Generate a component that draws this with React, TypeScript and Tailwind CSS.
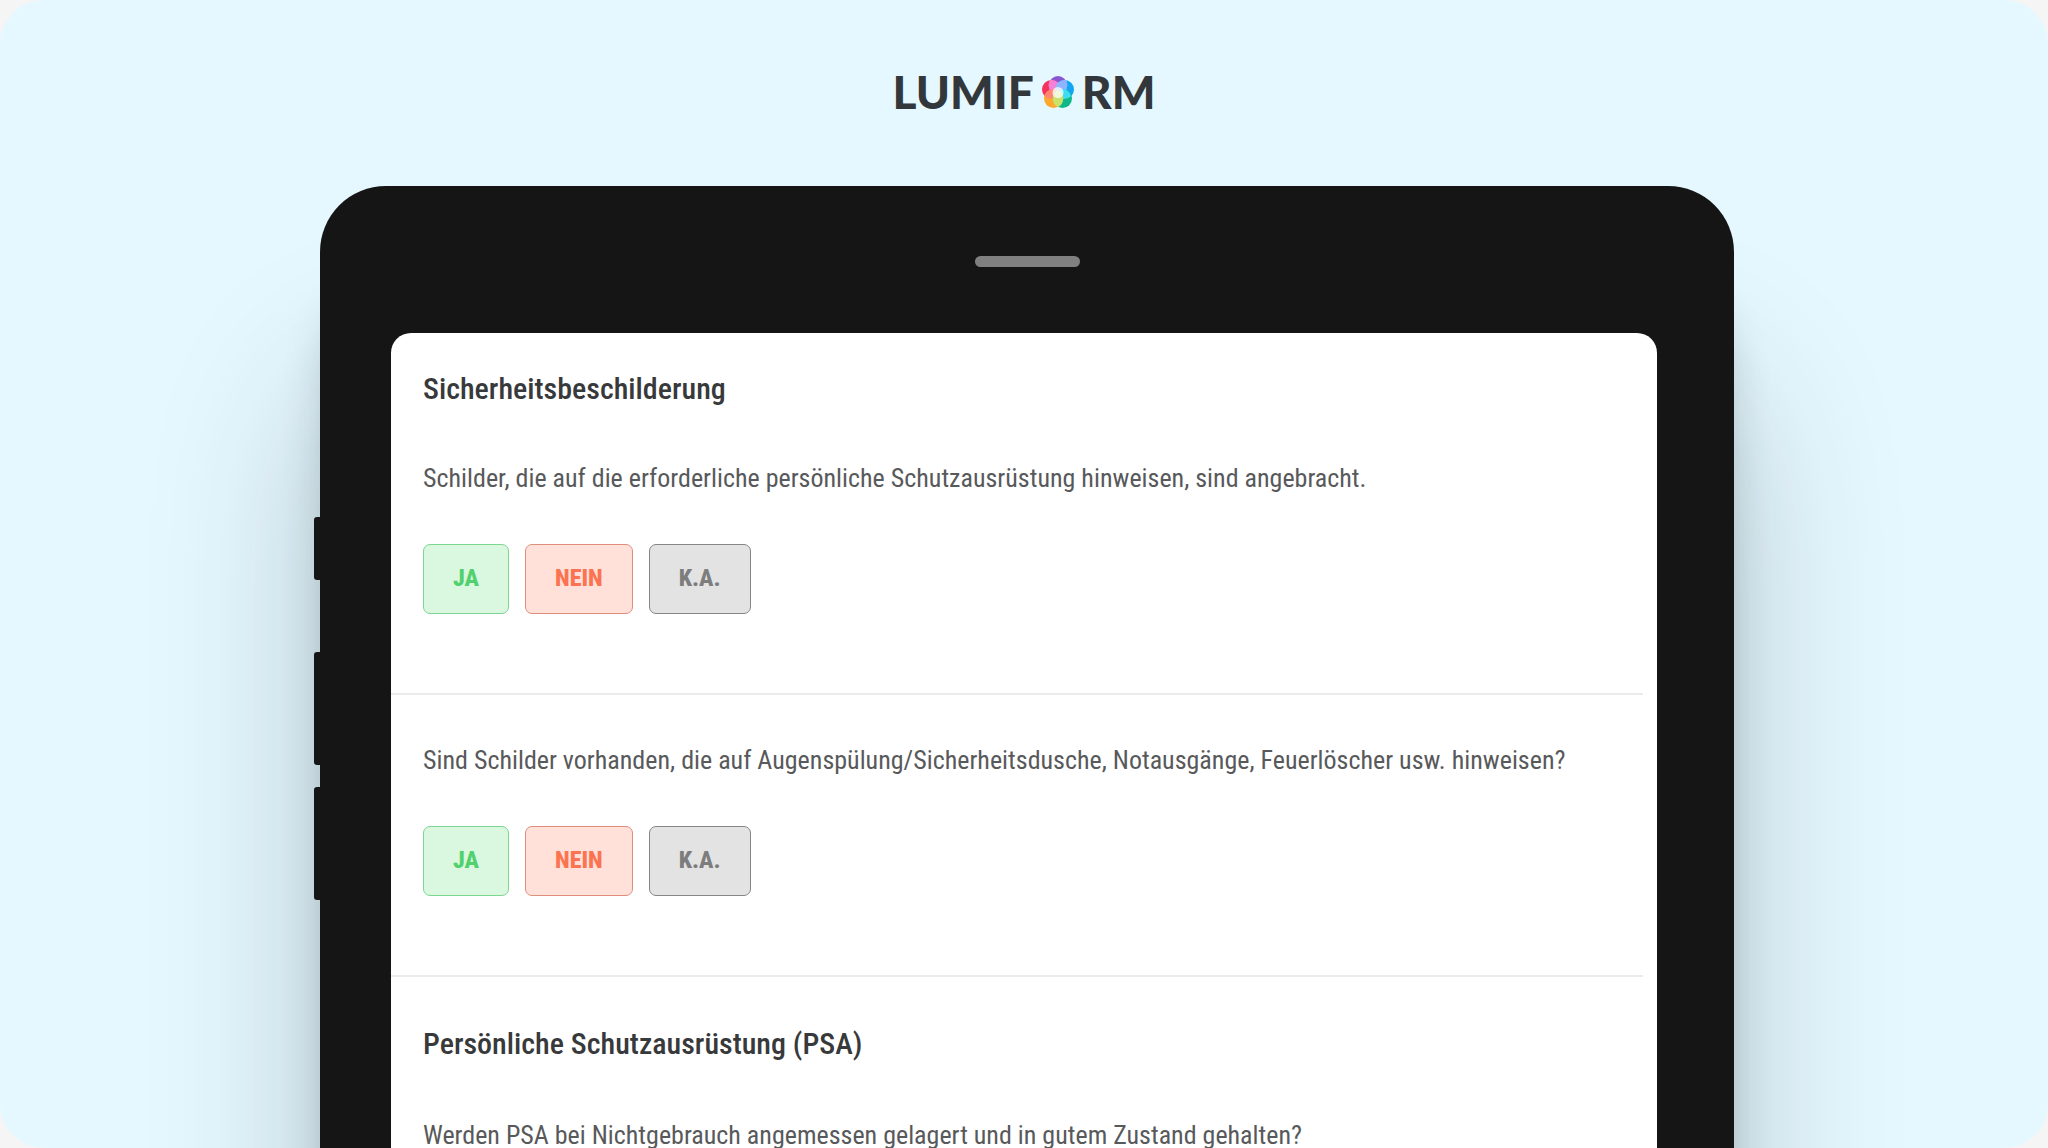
const textFont = "font-['Roboto_Condensed','Liberation_Sans_Narrow','Roboto',sans-serif]";

function Logo() {
  return (
    <a
      href="#"
      aria-label="Lumiform"
      className="flex items-center gap-2 self-start text-[46px] leading-[44px] font-black text-[#32373b] font-['Lato',sans-serif]"
    >
      <span>LUMIF</span>
      <svg width="32" height="34" viewBox="0 0 32 34" aria-hidden="true">
        <circle cx="16" cy="10" r="9" fill="#8a55d0" />
        <circle cx="9.5" cy="14.5" r="9.5" fill="#f5325c" />
        <circle cx="22.5" cy="14.5" r="9.5" fill="#12a5f4" />
        <circle cx="20.5" cy="23.5" r="9.5" fill="#0cb887" />
        <circle cx="11.5" cy="23.5" r="9.5" fill="#fda92e" />
        <path d="M8 5.100a9.500 9.500 0 0 1 10.900 9.400a9.500 9.500 0 0 1-2.900 5a9.500 9.500 0 0 1-9.500-9.500a9.500 9.500 0 0 1 1.500-4.900z" fill="#f87fd6" />
        <path d="M24 5.100a9.500 9.500 0 0 0-10.900 9.400a9.500 9.500 0 0 0 2.900 5a9.500 9.500 0 0 0 9.500-9.500a9.500 9.500 0 0 0-1.500-4.900z" fill="#8fb4ff" />
        <path d="M2.900 21.300a9.500 9.500 0 0 1 16-4.500a9.500 9.500 0 0 1-9.400 7.200a9.500 9.500 0 0 1-6.600-2.700z" fill="#ff8574" />
        <path d="M29.100 21.300a9.500 9.500 0 0 0-16-4.500a9.500 9.500 0 0 0 9.400 7.200a9.500 9.500 0 0 0 6.600-2.700z" fill="#3edcf0" />
        <path d="M16 15a9.500 9.500 0 0 1 0 17a9.500 9.500 0 0 1 0-17z" fill="#c9e26b" />
        <circle cx="16" cy="17.5" r="5.5" fill="#fff" opacity="0.75" />
      </svg>
      <span>RM</span>
    </a>
  );
}

const answerStyle = "h-[70px] rounded-[7px] border px-[29px] pb-[2px] text-[24px] leading-[32px] font-extrabold";

function Answers({ label }: { label: string }) {
  return (
    <div role="group" aria-label={label} className="flex gap-4">
      <button type="button" className={answerStyle + " border-[#7ed592] bg-[#daf7df] text-[#50d16d]"}>JA</button>
      <button type="button" className={answerStyle + " border-[#e08e7c] bg-[#ffe1d9] text-[#fb7350]"}>NEIN</button>
      <button type="button" className={answerStyle + " border-[#868686] bg-[#e3e3e3] text-[#7d7d7d]"}>K.A.</button>
    </div>
  );
}

const headingStyle = "px-8 text-[30px] leading-[40px] font-medium text-[#38393b]";
const questionStyle = "px-8 text-[26px] leading-[36px] whitespace-nowrap text-[#58595b]";

function Question({ text }: { text: string }) {
  return (
    <>
      <p className={questionStyle}>{text}</p>
      <div className="mt-12 px-8">
        <Answers label={text} />
      </div>
    </>
  );
}

export default function App() {
  return (
    <div className="h-screen overflow-hidden bg-[#f5f5f5]">
      <main className="flex h-full flex-col overflow-hidden rounded-[44px] bg-[#e6f8ff]">
        <header className="flex h-[186px] shrink-0 justify-center pt-[70px]">
          <Logo />
        </header>
        <div className="flex-1 pr-[314px] pl-80">
          <div className="relative h-[1240px] rounded-[66px] bg-[#151515] shadow-[0_200px_170px_rgba(20,35,40,0.24),0_110px_50px_-16px_rgba(20,30,30,0.3)]">
            <div className="absolute top-[331px] -left-[6px] flex flex-col">
              <span className="h-[63px] w-3 rounded-[3px] bg-[#151515]" />
              <span className="mt-[72px] h-[113px] w-3 rounded-[3px] bg-[#151515]" />
              <span className="mt-[22px] h-[113px] w-3 rounded-[3px] bg-[#151515]" />
            </div>
            <div className="flex h-[147px] justify-center pt-[70px]">
              <div className="h-[11px] w-[105px] rounded-full bg-[#808080]" />
            </div>
            <section className={"mr-[77px] ml-[71px] h-[1000px] rounded-[20px] bg-white pt-9 " + textFont}>
              <h2 className={headingStyle}>Sicherheitsbeschilderung</h2>
              <div className="mt-[51px]">
                <Question text="Schilder, die auf die erforderliche persönliche Schutzausrüstung hinweisen, sind angebracht." />
              </div>
              <hr className="mt-[79px] mr-[14px] border-t-2 border-[#ebebeb]" />
              <div className="mt-[47px]">
                <Question text="Sind Schilder vorhanden, die auf Augenspülung/Sicherheitsdusche, Notausgänge, Feuerlöscher usw. hinweisen?" />
              </div>
              <hr className="mt-[79px] mr-[14px] border-t-2 border-[#ebebeb]" />
              <h2 className={"mt-[47px] " + headingStyle}>Persönliche Schutzausrüstung (PSA)</h2>
              <p className={"mt-[53px] " + questionStyle}>Werden PSA bei Nichtgebrauch angemessen gelagert und in gutem Zustand gehalten?</p>
            </section>
          </div>
        </div>
      </main>
    </div>
  );
}
